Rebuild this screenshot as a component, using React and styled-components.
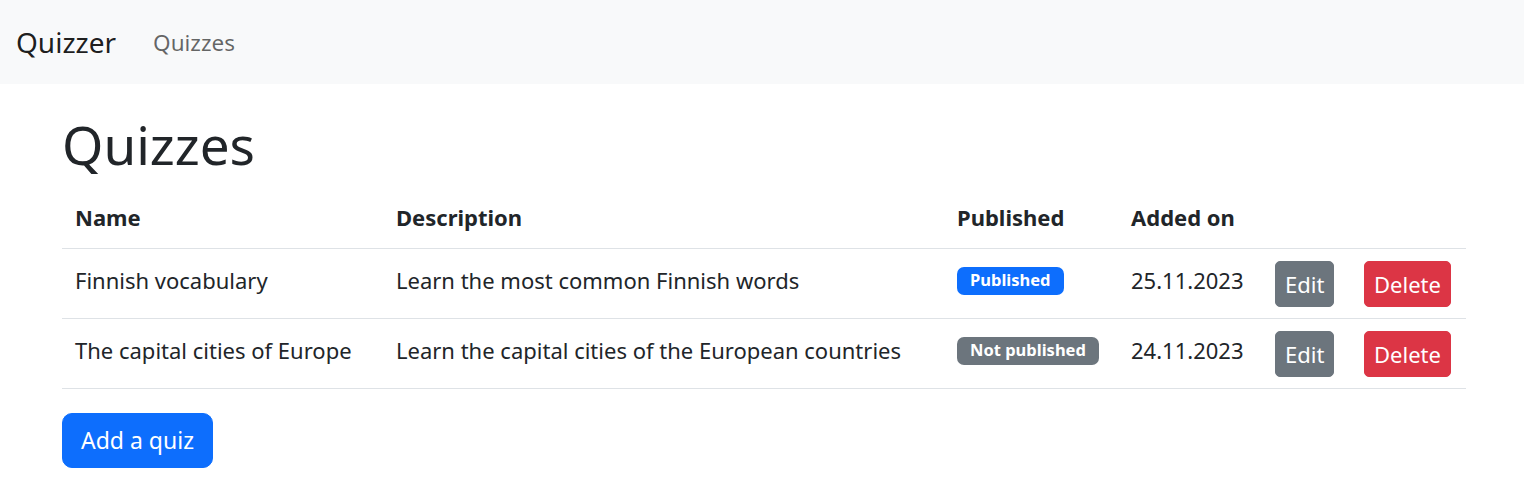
import styled, { createGlobalStyle } from "styled-components";

const GlobalStyle = createGlobalStyle`
  body {
    margin: 0;
    background: #fff;
    font-family: "Noto Sans", "Open Sans", sans-serif;
    color: #212529;
  }
`;

const Navbar = styled.nav`
  background: #f8f9fa;
  height: 84px;
  display: flex;
  align-items: center;
  padding: 0 16px;
  gap: 37px;
`;

const Brand = styled.a`
  font-size: 28px;
  color: rgba(0, 0, 0, 0.9);
  text-decoration: none;
`;

const NavLink = styled.a`
  font-size: 22.5px;
  color: rgba(0, 0, 0, 0.6);
  text-decoration: none;
`;

const Container = styled.main`
  padding: 0 58px 0 62px;
`;

const Heading = styled.h1`
  font-size: 53px;
  font-weight: 400;
  line-height: 1.2;
  margin: 29px 0 16px;
`;

const Table = styled.table`
  width: 100%;
  border-collapse: collapse;
  table-layout: fixed;
  font-size: 22px;
  line-height: 1.5;
  margin-bottom: 24px;
`;

const Col = styled.col`
  width: ${(p) => p.w}px;
`;

const Th = styled.th`
  box-sizing: border-box;
  text-align: left;
  font-weight: 700;
  padding: 8px 13px 14px;
  border-bottom: 1px solid #dee2e6;
`;

const Td = styled.td`
  box-sizing: border-box;
  padding: ${(p) => (p.text ? "9px 13px 14px" : "12px 13px 11px")};
  border-bottom: 1px solid #dee2e6;
  vertical-align: middle;
  white-space: nowrap;
`;

const Badge = styled.span`
  display: inline-block;
  background: ${(p) => (p.on ? "#0d6efd" : "#6c757d")};
  color: #fff;
  font-size: 16.5px;
  font-weight: 700;
  line-height: 1;
  padding: 5px 13px 6px;
  border-radius: 7px;
  vertical-align: 3px;
`;

const Button = styled.button`
  font-family: inherit;
  font-size: ${(p) => (p.large ? 23 : 22)}px;
  line-height: ${(p) => (p.large ? 33 : 30)}px;
  color: #fff;
  background: ${(p) => p.bg};
  border: 1px solid ${(p) => p.bg};
  border-radius: ${(p) => (p.large ? 10 : 5)}px;
  padding: ${(p) => (p.large ? "10px 18px" : "7px 9px")};
  cursor: pointer;
`;

const quizzes = [
  {
    name: "Finnish vocabulary",
    description: "Learn the most common Finnish words",
    published: true,
    added: "25.11.2023",
  },
  {
    name: "The capital cities of Europe",
    description: "Learn the capital cities of the European countries",
    published: false,
    added: "24.11.2023",
  },
];

export default function App() {
  return (
    <>
      <GlobalStyle />
      <Navbar>
        <Brand href="#">Quizzer</Brand>
        <NavLink href="#">Quizzes</NavLink>
      </Navbar>
      <Container>
        <Heading>Quizzes</Heading>
        <Table>
          <colgroup>
            <Col w={321} />
            <Col w={561} />
            <Col w={174} />
            <Col w={144} />
            <Col w={89} />
            <Col w={115} />
          </colgroup>
          <thead>
            <tr>
              <Th>Name</Th>
              <Th>Description</Th>
              <Th>Published</Th>
              <Th>Added on</Th>
              <Th></Th>
              <Th></Th>
            </tr>
          </thead>
          <tbody>
            {quizzes.map((q) => (
              <tr key={q.name}>
                <Td text>{q.name}</Td>
                <Td text>{q.description}</Td>
                <Td text>
                  <Badge on={q.published}>
                    {q.published ? "Published" : "Not published"}
                  </Badge>
                </Td>
                <Td text>{q.added}</Td>
                <Td>
                  <Button bg="#6c757d">Edit</Button>
                </Td>
                <Td>
                  <Button bg="#dc3545">Delete</Button>
                </Td>
              </tr>
            ))}
          </tbody>
        </Table>
        <Button large bg="#0d6efd">
          Add a quiz
        </Button>
      </Container>
    </>
  );
}
